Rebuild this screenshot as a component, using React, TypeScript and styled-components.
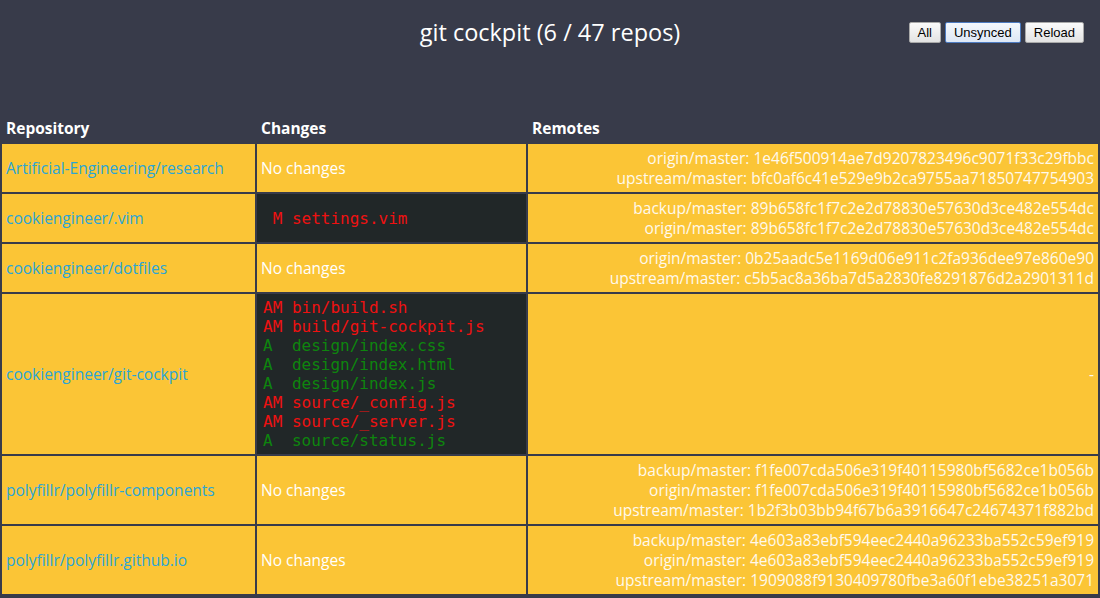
import styled, { createGlobalStyle } from "styled-components";

type Change = { status: string; file: string };
type Repo = {
  name: string;
  changes: Change[];
  remotes: string[];
};

const repos: Repo[] = [
  {
    name: "Artificial-Engineering/research",
    changes: [],
    remotes: [
      "origin/master: 1e46f500914ae7d9207823496c9071f33c29fbbc",
      "upstream/master: bfc0af6c41e529e9b2ca9755aa71850747754903",
    ],
  },
  {
    name: "cookiengineer/.vim",
    changes: [{ status: " M", file: "settings.vim" }],
    remotes: [
      "backup/master: 89b658fc1f7c2e2d78830e57630d3ce482e554dc",
      "origin/master: 89b658fc1f7c2e2d78830e57630d3ce482e554dc",
    ],
  },
  {
    name: "cookiengineer/dotfiles",
    changes: [],
    remotes: [
      "origin/master: 0b25aadc5e1169d06e911c2fa936dee97e860e90",
      "upstream/master: c5b5ac8a36ba7d5a2830fe8291876d2a2901311d",
    ],
  },
  {
    name: "cookiengineer/git-cockpit",
    changes: [
      { status: "AM", file: "bin/build.sh" },
      { status: "AM", file: "build/git-cockpit.js" },
      { status: "A ", file: "design/index.css" },
      { status: "A ", file: "design/index.html" },
      { status: "A ", file: "design/index.js" },
      { status: "AM", file: "source/_config.js" },
      { status: "AM", file: "source/_server.js" },
      { status: "A ", file: "source/status.js" },
    ],
    remotes: [],
  },
  {
    name: "polyfillr/polyfillr-components",
    changes: [],
    remotes: [
      "backup/master: f1fe007cda506e319f40115980bf5682ce1b056b",
      "origin/master: f1fe007cda506e319f40115980bf5682ce1b056b",
      "upstream/master: 1b2f3b03bb94f67b6a3916647c24674371f882bd",
    ],
  },
  {
    name: "polyfillr/polyfillr.github.io",
    changes: [],
    remotes: [
      "backup/master: 4e603a83ebf594eec2440a96233ba552c59ef919",
      "origin/master: 4e603a83ebf594eec2440a96233ba552c59ef919",
      "upstream/master: 1909088f9130409780fbe3a60f1ebe38251a3071",
    ],
  },
];

const GlobalStyle = createGlobalStyle`
  html, body {
    margin: 0;
    padding: 0;
    background: #383b4a;
  }
  body {
    font-family: "Open Sans", "Noto Sans", sans-serif;
    font-size: 15.5px;
    color: #ffffff;
  }
`;

function App() {
  return (
    <>
      <GlobalStyle />
      <Header>
        <span />
        <Title>git cockpit (6 / 47 repos)</Title>
        <Buttons>
          <Button>All</Button>
          <Button active>Unsynced</Button>
          <Button>Reload</Button>
        </Buttons>
      </Header>
      <Table>
        <colgroup>
          <col style={{ width: 253 }} />
          <col style={{ width: 269 }} />
          <col />
        </colgroup>
        <thead>
          <tr>
            <Th>Repository</Th>
            <Th>Changes</Th>
            <Th>Remotes</Th>
          </tr>
        </thead>
        <tbody>
          {repos.map((repo) => (
            <tr key={repo.name}>
              <Td>
                <RepoLink href="#">{repo.name}</RepoLink>
              </Td>
              {repo.changes.length > 0 ? (
                <CodeCell>
                  {repo.changes.map((c) => (
                    <CodeLine key={c.file} added={c.status.trim() === "A"}>
                      {c.status} {c.file}
                    </CodeLine>
                  ))}
                </CodeCell>
              ) : (
                <Td>No changes</Td>
              )}
              <RemoteCell>
                {repo.remotes.length > 0
                  ? repo.remotes.map((r) => <div key={r}>{r}</div>)
                  : "-"}
              </RemoteCell>
            </tr>
          ))}
        </tbody>
      </Table>
    </>
  );
}

const Header = styled.header`
  display: grid;
  grid-template-columns: 1fr auto 1fr;
  align-items: start;
  height: 108px;
`;

const Title = styled.h1`
  margin: 0;
  padding-top: 16px;
  font-size: 23.5px;
  font-weight: normal;
  line-height: 32px;
  color: #ffffff;
`;

const Buttons = styled.div`
  justify-self: end;
  display: flex;
  gap: 4px;
  padding: 22px 16px 0 0;
`;

const Button = styled.button<{ active?: boolean }>`
  font-family: "Liberation Sans", Arial, sans-serif;
  font-size: 13px;
  height: 21px;
  padding: 0 8px;
  color: #000;
  border-radius: 2px;
  border: 1px solid ${(p) => (p.active ? "#4d7bc1" : "#a9a9a9")};
  background: ${(p) =>
    p.active
      ? "linear-gradient(#f4f8fd, #dde7f5)"
      : "linear-gradient(#fbfbfb, #e3e3e3)"};
  cursor: pointer;
`;

const Table = styled.table`
  width: 100%;
  table-layout: fixed;
  border-spacing: 2px;
  border-collapse: separate;
`;

const Th = styled.th`
  text-align: left;
  font-weight: bold;
  padding: 8px 4px 4px;
  height: 20px;
  line-height: 20px;
  vertical-align: bottom;
`;

const Td = styled.td`
  background: #fbc536;
  color: #ffffff;
  padding: 4px 5px 4px 4px;
  line-height: 20px;
  vertical-align: middle;
  white-space: nowrap;
`;

const CodeCell = styled(Td)`
  background: #212728;
  padding: 4px 6px;
  font-family: "DejaVu Sans Mono", monospace;
  font-size: 16px;
  line-height: 19px;
`;

const CodeLine = styled.div<{ added?: boolean }>`
  white-space: pre;
  color: ${(p) => (p.added ? "#0e850e" : "#ee1111")};
`;

const RemoteCell = styled(Td)`
  text-align: right;
  padding-right: 4px;
  color: #fff9ec;
`;

const RepoLink = styled.a`
  color: #2aa5d6;
  text-decoration: none;
`;

export default App;
